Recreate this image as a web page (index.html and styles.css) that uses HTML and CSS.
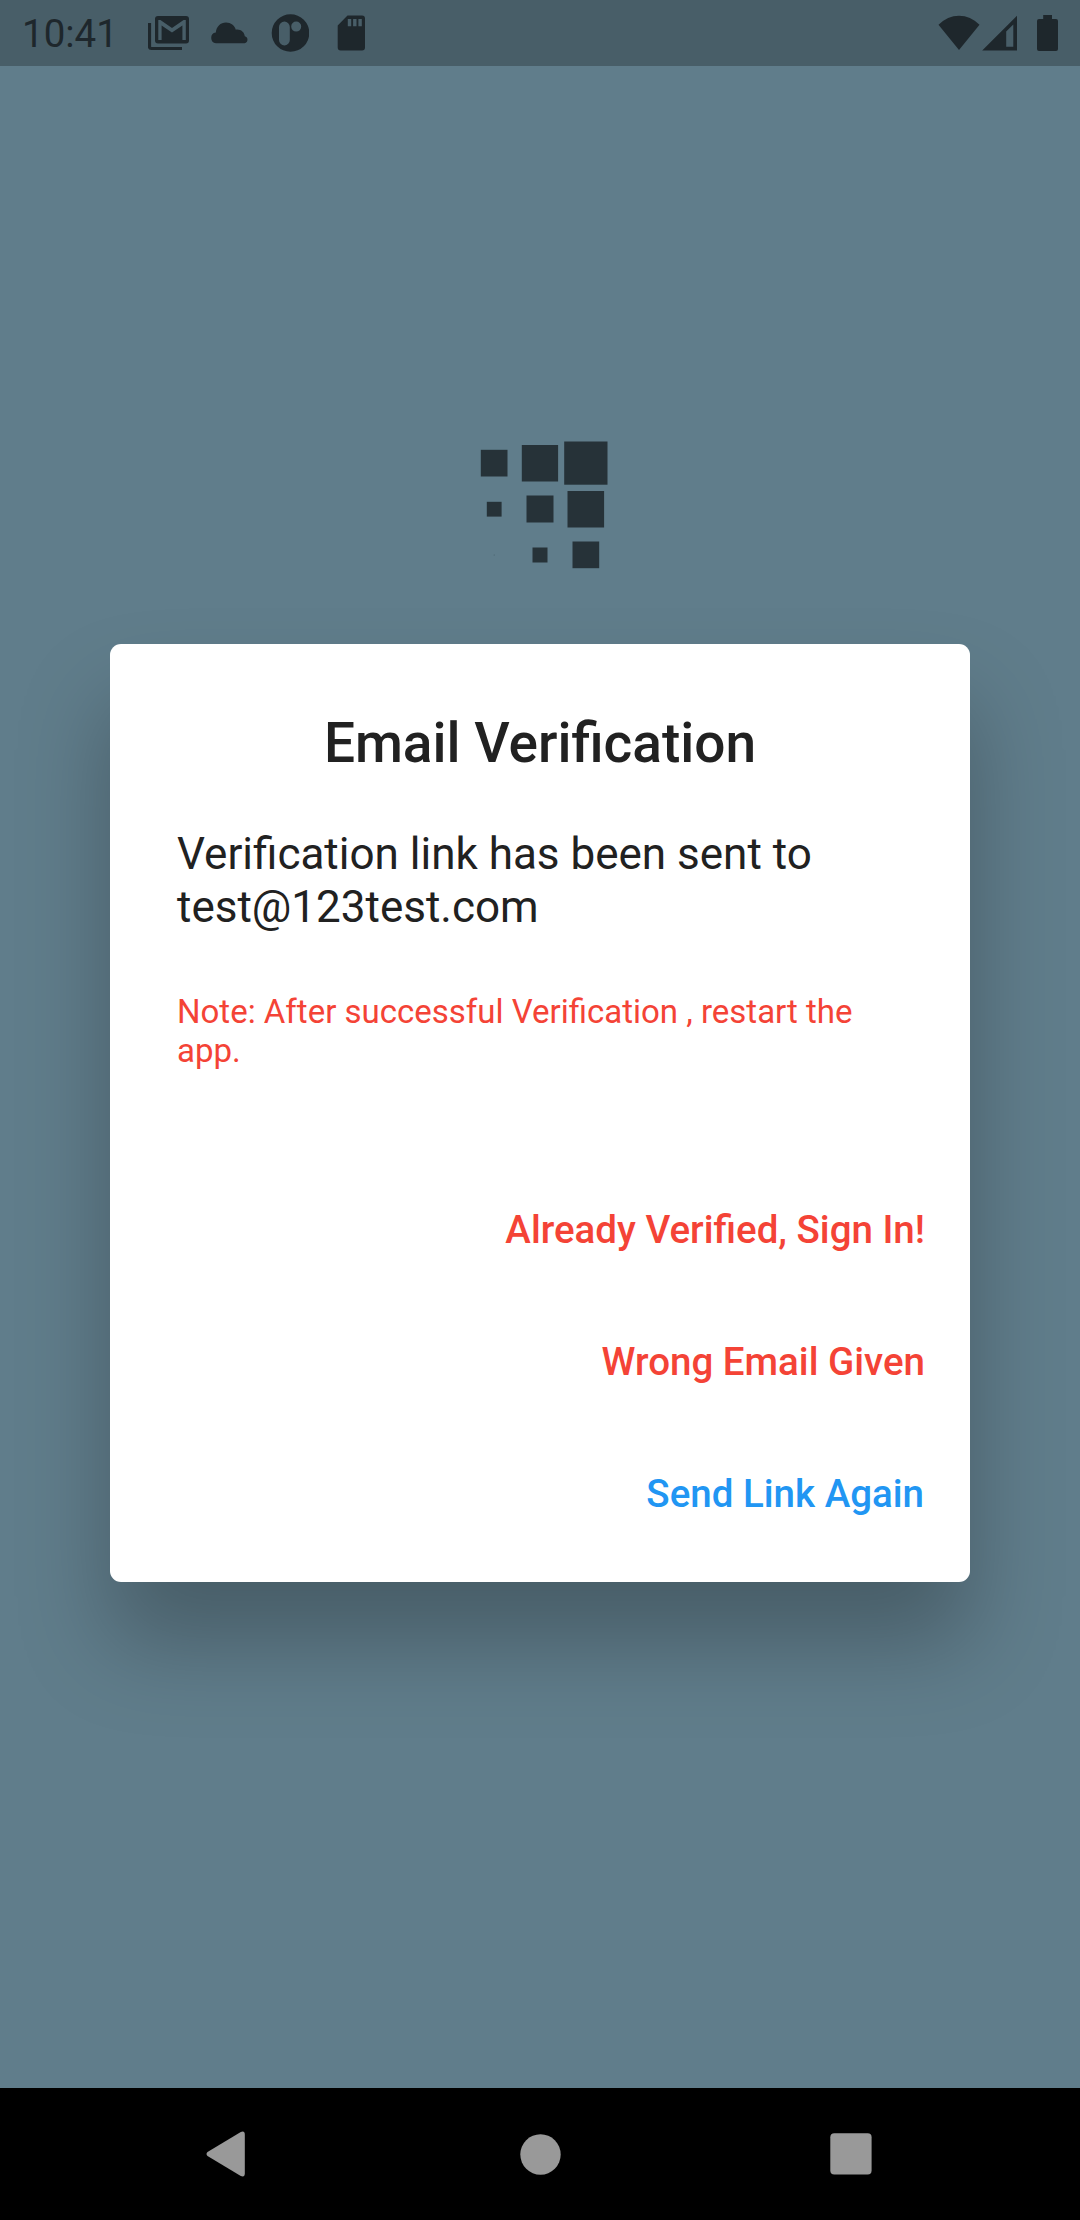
FILE: index.html
```html
<!DOCTYPE html>
<html lang="en">
<head>
<meta charset="utf-8">
<title>Email Verification</title>
<link rel="stylesheet" href="styles.css">
</head>
<body>
<div class="screen">
  <header class="status-bar">
    <span class="clock">10:41</span>
    <div class="notifications">
      <svg class="icon" width="42" height="36" viewBox="148 15 42 36">
        <path d="M149.5 23V46.5Q149.500 48.500 151.500 48.500H182" fill="none" stroke="currentColor" stroke-width="3.200"/>
        <path fill-rule="evenodd" fill="currentColor" d="M158 16H186Q189 16 189 19V40.500Q189 43.500 186 43.500H158Q155 43.500 155 40.500V19Q155 16 158 16ZM158.300 20V40H161.600V25.500L172 32.500L182.400 25.500V40H185.800V20H183.600L172 28L160.400 20Z"/>
      </svg>
      <svg class="icon" width="38" height="22" viewBox="211 21 38 22">
        <path fill="currentColor" d="M216 42.200A5.400 5.400 0 0 1 215.800 31.500C216.500 25.500 220.500 21.600 226 21.600C231 21.600 234.500 24.500 235.800 28.700C240.500 28 244.300 31 244.800 35.200A3.600 3.600 0 0 1 244.600 42.200Z"/>
      </svg>
      <svg class="icon" width="38" height="38" viewBox="271 14 38 38">
        <path fill-rule="evenodd" fill="currentColor" d="M290.500 14.200A18.800 18.800 0 1 1 290.500 51.800A18.800 18.800 0 1 1 290.500 14.200ZM279 27V40A5.400 5.400 0 0 0 289.800 40V27A5.400 5.400 0 0 0 279 27ZM291.200 26.600A5 5 0 1 0 301.200 26.600A5 5 0 1 0 291.200 26.600Z"/>
      </svg>
      <svg class="icon" width="28" height="36" viewBox="337 15.500 28 36">
        <path fill-rule="evenodd" fill="currentColor" d="M347.500 16H362Q365 16 365 19V48Q365 51 362 51H340.700Q337.700 51 337.700 48V26ZM347.800 19.500V26.800H351.200V19.500ZM353.100 19.500V26.800H356.500V19.500ZM358.400 19.500V26.800H361.800V19.500Z"/>
      </svg>
    </div>
    <div class="system">
      <svg class="icon" width="42" height="36" viewBox="937.500 14.500 42 36">
        <path fill="currentColor" d="M958.500 49.500L938 24.300Q947 15.200 958.500 15.200T979 24.300Z"/>
      </svg>
      <svg class="icon" width="35" height="36" viewBox="982 14.500 35 36">
        <path fill-rule="evenodd" fill="currentColor" d="M982.200 50L1017 15.200V50ZM1006.200 31V46.300H1013.300V24Z"/>
      </svg>
      <svg class="icon" width="21" height="36" viewBox="1037 15 21 36">
        <path fill="currentColor" d="M1043.200 15H1052V19H1056Q1058 19 1058 21V49Q1058 51 1056 51H1039Q1037 51 1037 49V21Q1037 19 1039 19H1043.200Z"/>
      </svg>
    </div>
  </header>
  <main class="content">
    <svg class="logo" width="128" height="128" viewBox="480 441 128 128">
      <g fill="#263238">
        <rect x="480.800" y="449.800" width="26.700" height="26.700"/>
        <rect x="521.800" y="445" width="36.300" height="36.500"/>
        <rect x="564.200" y="441.500" width="43.300" height="43.200"/>
        <rect x="486.800" y="501.800" width="14.800" height="14.800"/>
        <rect x="526.500" y="495.500" width="27" height="27"/>
        <rect x="567.500" y="491" width="36.600" height="36.500"/>
        <rect x="532.500" y="547.500" width="15" height="15"/>
        <rect x="572.500" y="541.500" width="26.700" height="26.700"/>
      </g>
      <circle cx="494.200" cy="555" r=".6" fill="#46606c"/>
    </svg>
    <section class="dialog">
      <h1 class="title">Email Verification</h1>
      <p class="message">Verification link has been sent to<br>test@123test.com</p>
      <p class="note">Note: After successful Verification , restart the<br>app.</p>
      <div class="actions">
        <button class="action">Already Verified, Sign In!</button>
        <button class="action">Wrong Email Given</button>
        <button class="action primary">Send Link Again</button>
      </div>
    </section>
  </main>
  <nav class="nav-bar">
    <svg width="39" height="46" viewBox="206 2131.500 39 46"><path fill="#999" d="M207.500 2152.500L240.800 2132.500Q244.800 2131 244.800 2135V2174Q244.800 2178 240.800 2176.500L207.500 2156.500Q205.500 2154.500 207.500 2152.500Z"/></svg>
    <svg class="home" width="41" height="41" viewBox="0 0 41 41"><circle cx="20.500" cy="20.500" r="20.200" fill="#999"/></svg>
    <svg width="42" height="42" viewBox="0 0 42 42"><rect x=".3" y=".2" width="41.300" height="41.300" rx="4" fill="#999"/></svg>
  </nav>
</div>
</body>
</html>
```
FILE: styles.css
```css
* {
  box-sizing: border-box;
}

body {
  margin: 0;
  font-family: Roboto, "Liberation Sans", sans-serif;
}

.screen {
  display: flex;
  flex-direction: column;
  width: 1080px;
  height: 2220px;
  overflow: hidden;
  background: #607d8b;
}

.status-bar {
  display: flex;
  align-items: center;
  height: 66px;
  padding: 0 22px;
  background: #485e68;
  color: #1e272c;
}

.clock {
  width: 126px;
  font-size: 38.5px;
  line-height: 46px;
  padding-top: 2px;
}

.icon {
  display: block;
}

.notifications {
  display: flex;
  align-items: center;
  gap: 22px;
}

.notifications .icon:nth-child(2) {
  margin-left: -1px;
}

.notifications .icon:nth-child(4) {
  margin-left: 6px;
}

.system {
  display: flex;
  align-items: center;
  margin-left: auto;
}

.system .icon:nth-child(2) {
  margin: 0 20px 0 2px;
}

.content {
  flex: 1;
  display: flex;
  flex-direction: column;
  align-items: center;
  padding-top: 375px;
}

.logo {
  display: block;
  flex: none;
  margin-left: 8px;
}

.dialog {
  width: 860px;
  height: 938px;
  margin-top: 74.7px;
  padding: 67px 33px 0 67px;
  border-radius: 11px;
  background: #fff;
  box-shadow: 0 60px 92px rgba(0, 0, 0, 0.26);
  color: #212121;
}

.title {
  margin: 0 34px 53.3px 0;
  font-size: 55px;
  font-weight: 500;
  line-height: 64px;
  text-align: center;
}

.message {
  margin: 0 0 57.7px;
  font-size: 44px;
  line-height: 53px;
}

.note {
  margin: 0 0 94px;
  color: #f44336;
  font-size: 33px;
  line-height: 39px;
}

.actions {
  display: flex;
  flex-direction: column;
  align-items: flex-end;
}

.action {
  height: 132px;
  padding: 0 12px;
  border: 0;
  background: none;
  color: #f44336;
  font: 500 38.5px/46px Roboto, "Liberation Sans", sans-serif;
}

.primary {
  padding-right: 13px;
  color: #2196f3;
}

.nav-bar {
  display: flex;
  align-items: center;
  justify-content: space-between;
  height: 132px;
  padding: 0 208px 0 206px;
  background: #000;
}

.home {
  margin-left: 5px;
}
```
